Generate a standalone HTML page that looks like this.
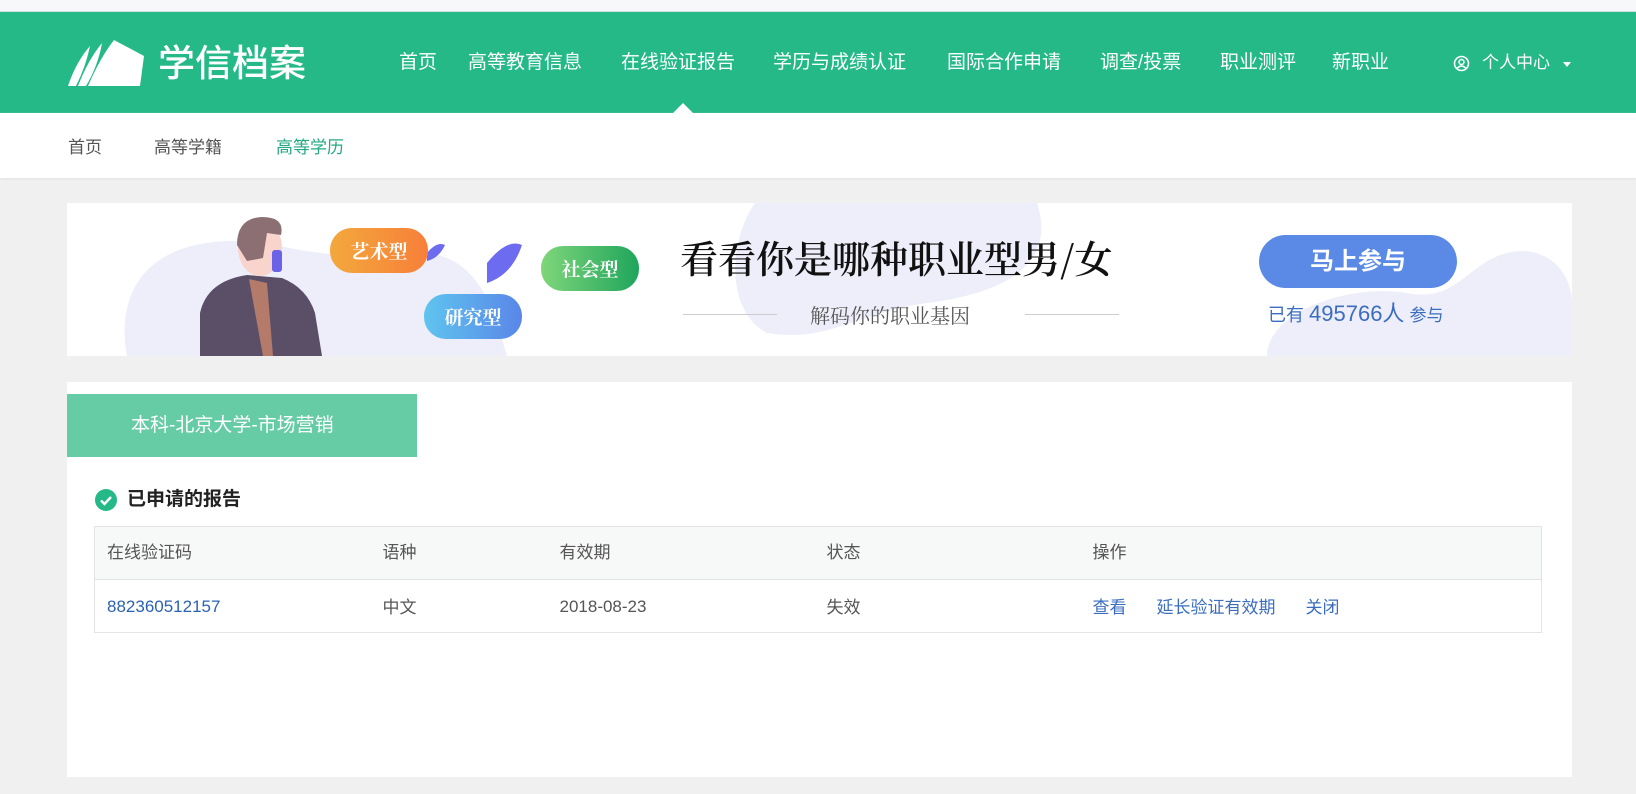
<!DOCTYPE html>
<html><head><meta charset="utf-8"><style>
*{margin:0;padding:0;box-sizing:border-box}
body{width:1636px;height:794px;background:#f0f0f0;font-family:"Liberation Sans","Noto Sans CJK SC",sans-serif;position:relative;overflow:hidden}
.a{position:absolute;white-space:nowrap}
.top{left:0;top:0;width:1636px;height:12px;background:#f7f8fa;border-bottom:1px solid #cfe3dc}
.nav{left:0;top:12px;width:1636px;height:101px;background:#25b987}
.nav .i{color:#fff;font-size:19px;top:38px;line-height:26px}
.sub{left:0;top:113px;width:1636px;height:65px;background:#fff;box-shadow:0 1px 2px #e2e2e2}
.sub span{font-size:17px;top:20px;color:#555}
.tag{color:#fff;font-family:"Noto Serif CJK SC",serif;font-weight:bold;font-size:19px;border-radius:22px;text-align:center;line-height:45px;width:98px;height:45px}
td{font-size:17px;color:#555;line-height:24px;vertical-align:middle}
td span{display:inline-block}
.r2 td{padding-top:4px}
</style></head><body>
<div class="a top"></div>
<div class="a nav">
  <svg class="a" style="left:68px;top:28px" width="76" height="46" viewBox="0 0 76 46"><path d="M0 46 Q8 22 22 6 Q18 26 8 46Z M10 46 Q20 20 34 3 Q30 26 18 46Z M20 46 Q32 18 46 0 L76 16 L72 46Z" fill="#fff"/></svg>
  <div class="a" style="left:158px;top:29px;color:#fff;font-size:37px;line-height:46px;font-weight:500">学信档案</div>
  <div class="a i" style="left:399px">首页</div>
  <div class="a i" style="left:468px">高等教育信息</div>
  <div class="a i" style="left:621px">在线验证报告</div>
  <div class="a i" style="left:773px">学历与成绩认证</div>
  <div class="a i" style="left:947px">国际合作申请</div>
  <div class="a i" style="left:1100px">调查/投票</div>
  <div class="a i" style="left:1220px">职业测评</div>
  <div class="a i" style="left:1332px">新职业</div>
  <svg class="a" style="left:1453px;top:43px" width="17" height="17" viewBox="0 0 17 17"><circle cx="8.5" cy="8.5" r="7" fill="none" stroke="#fff" stroke-width="1.6"/><circle cx="8.5" cy="7" r="2.5" fill="none" stroke="#fff" stroke-width="1.5"/><path d="M4 13.5 Q8.5 8.5 13 13.5" fill="none" stroke="#fff" stroke-width="1.5"/></svg>
  <div class="a i" style="left:1482px;font-size:17px">个人中心</div>
  <div class="a" style="left:1563px;top:50px;border:4px solid transparent;border-top:5px solid #fff;border-bottom:0"></div>
  <div class="a" style="left:673px;top:91px;border:10px solid transparent;border-bottom-color:#fff;border-top:0"></div>
</div>
<div class="a sub">
  <span class="a" style="left:68px">首页</span>
  <span class="a" style="left:154px">高等学籍</span>
  <span class="a" style="left:276px;color:#25a983">高等学历</span>
</div>
<div class="a" style="left:67px;top:203px;width:1505px;height:153px;background:#fff;overflow:hidden">
  <svg class="a" style="left:0;top:0" width="1505" height="153"><path d="M60 153 C50 100 70 50 140 40 C200 30 240 60 320 50 C400 40 420 80 440 153Z" fill="#eeeefa"/><path d="M688 0 L970 0 C990 60 940 90 860 100 C790 110 760 140 700 130 C660 110 660 40 688 0Z" fill="#eeeefa"/><path d="M1200 153 C1200 110 1280 80 1340 90 C1390 100 1400 60 1440 50 C1480 40 1505 70 1505 100 L1505 153Z" fill="#eeeefa"/>
  <path d="M133 153 L133 110 Q140 78 180 72 L215 75 Q240 85 248 110 L255 153Z" fill="#5b4f68"/>
  <path d="M182 76 L196 153 L206 153 L200 80Z" fill="#b47a6a"/>
  <ellipse cx="193" cy="45" rx="22" ry="28" fill="#f9d4cc"/><path d="M170 42 Q170 15 195 14 Q218 14 214 32 L200 30 L196 55 L180 58Z" fill="#8b6f73"/>
  <rect x="205" y="47" width="10" height="22" rx="3" fill="#6b62e8"/>
  <path d="M420 60 Q440 35 455 42 Q445 72 420 80Z" fill="#6d6cf0"/><path d="M360 50 Q370 38 378 42 Q372 55 360 58Z" fill="#6d6cf0"/></svg>
  <div class="a tag" style="left:263px;top:25px;background:linear-gradient(90deg,#f3a83c,#f77f3a)">艺术型</div>
  <div class="a tag" style="left:474px;top:43px;background:linear-gradient(90deg,#7fd67a,#1fa55c)">社会型</div>
  <div class="a tag" style="left:357px;top:91px;background:linear-gradient(90deg,#5fc4ef,#5a86e8)">研究型</div>
  <div class="a" style="left:613px;top:28px;font-family:'Noto Serif CJK SC',serif;font-size:38px;line-height:52px;color:#111;font-weight:600">看看你是哪种职业型男/女</div>
  <div class="a" style="left:616px;top:111px;width:94px;height:1px;background:#ccc"></div>
  <div class="a" style="left:743px;top:98px;font-family:'Noto Serif CJK SC',serif;font-size:20px;line-height:28px;color:#555">解码你的职业基因</div>
  <div class="a" style="left:958px;top:111px;width:94px;height:1px;background:#ccc"></div>
  <div class="a" style="left:1192px;top:32px;width:198px;height:53px;border-radius:27px;background:#5b8ae6;color:#fff;font-size:24px;font-weight:bold;text-align:center;line-height:53px">马上参与</div>
  <div class="a" style="left:1201px;top:97px;color:#3a6dbf;font-size:18px;line-height:28px">已有 <span style="font-size:22px">495766人</span> <span style="font-size:17px">参与</span></div>
</div>
<div class="a" style="left:67px;top:382px;width:1505px;height:395px;background:#fff">
  <div class="a" style="left:0;top:12px;width:350px;height:63px;background:#66cca6;color:#fff;font-size:19px;line-height:63px;padding-left:64px">本科-北京大学-市场营销</div>
  <svg class="a" style="left:28px;top:107px" width="22" height="22" viewBox="0 0 22 22"><circle cx="11" cy="11" r="11" fill="#25b987"/><path d="M6 11.5 L9.5 15 L16 8" fill="none" stroke="#fff" stroke-width="2.4"/></svg>
  <div class="a" style="left:60px;top:105px;font-size:19px;font-weight:bold;color:#222;line-height:26px">已申请的报告</div>
  <table class="a" style="left:27px;top:144px;width:1448px;border-collapse:collapse;border:1px solid #e3e3e3">
    <tr style="background:#f7f8f8;height:53px;border-bottom:1px solid #e3e3e3"><td style="padding-left:12px;width:288px">在线验证码</td><td style="width:177px">语种</td><td style="width:267px">有效期</td><td style="width:266px">状态</td><td>操作</td></tr>
    <tr class="r2" style="height:53px"><td style="padding-left:12px;color:#2b62b0"><span style="position:relative;top:-1px">882360512157</span></td><td>中文</td><td><span style="position:relative;top:-1px">2018-08-23</span></td><td>失效</td><td style="color:#3a6dbf">查看<span style="margin-left:30px">延长验证有效期</span><span style="margin-left:30px">关闭</span></td></tr>
  </table>
</div>
</body></html>
